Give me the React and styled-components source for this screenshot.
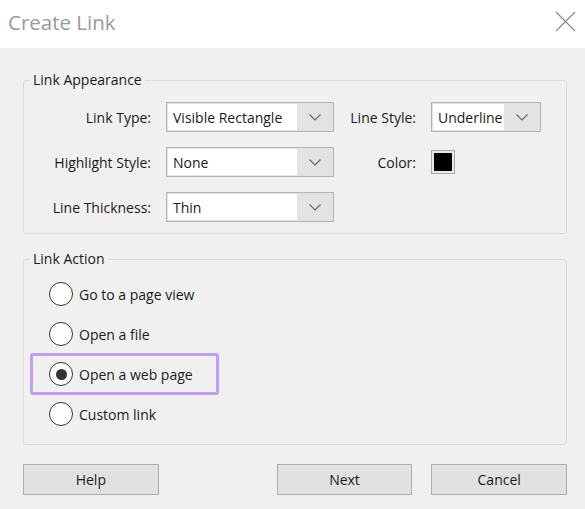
import React from 'react'
import styled, {createGlobalStyle} from "styled-components"

const Global=createGlobalStyle `
html, body {
  margin: 0;
  padding: 0;
  background: #f0f0f0;
}
body {
  font-family: "Open Sans", "Noto Sans", sans-serif;
  color: #1a1a1a;
}
`

const Dialog=styled.div `
width: 585px;
height: 509px;
display: flex;
flex-direction: column;
background: #f0f0f0;
overflow: hidden;
`

const TitleBar=styled.div `
height: 48px;
flex-shrink: 0;
display: flex;
align-items: center;
justify-content: space-between;
background: #ffffff;
padding: 0 9px 0 8px;
box-sizing: border-box;
`

const Title=styled.h1 `
margin: 0 0 4px 0;
font-size: 20.5px;
font-weight: 400;
color: #9a9a9a;
`

const Close=styled.button `
width: 22px;
height: 22px;
padding: 0;
border: none;
background: none;
display: flex;
align-items: center;
justify-content: center;
margin-bottom: 6px;
`

const Body=styled.div `
display: flex;
flex-direction: column;
padding: 23px 18px 0 23px;
gap: 16px;
`

const Group=styled.fieldset `
margin: 0;
padding: ${({$pad})=>$pad};
border: 1px solid #dcdcdc;
border-radius: 3px;
min-width: 0;
`

const Legend=styled.legend `
margin-left: 6px;
padding: 0 3px;
font-size: 14px;
line-height: 18px;
`

const FormGrid=styled.div `
display: grid;
grid-template-columns: 127px 168px 67px 110px;
grid-auto-rows: 30px;
column-gap: 15px;
row-gap: 15px;
align-items: center;
`

const Label=styled.span `
font-size: 14px;
text-align: right;
white-space: nowrap;
`

const Select=styled.div `
height: 30px;
box-sizing: border-box;
display: flex;
border: 1px solid #b4b4b4;
background: #e3e3e3;
padding: 1px;
`

const Value=styled.div `
flex: 1;
background: #ffffff;
font-size: 14px;
display: flex;
align-items: center;
padding-left: 5px;
white-space: nowrap;
`

const Arrow=styled.div `
width: 35px;
display: flex;
align-items: center;
justify-content: center;
`

const Swatch=styled.div `
width: 24px;
height: 24px;
box-sizing: border-box;
border: 1px solid #a8a8a8;
padding: 2px;
background: #e8e8e8;
&::after {
  content: "";
  display: block;
  width: 100%;
  height: 100%;
  background: #000;
}
`

const Options=styled.div `
display: flex;
flex-direction: column;
`

const Option=styled.div `
height: 40px;
display: flex;
align-items: center;
padding-left: 6px;
`

const Choice=styled.label `
width: 189px;
height: 42px;
box-sizing: border-box;
display: flex;
align-items: center;
gap: 6px;
padding-left: 16px;
border: 3px solid ${({$marked})=>$marked ? "#c49cf7" : "transparent"};
border-radius: 3px;
font-size: 14px;
`

const Radio=styled.span `
width: 24px;
height: 24px;
box-sizing: border-box;
border-radius: 50%;
border: 1.5px solid #333;
background: #fff;
display: flex;
align-items: center;
justify-content: center;
flex-shrink: 0;
&::after {
  content: "";
  width: 11px;
  height: 11px;
  border-radius: 50%;
  background: ${({$on})=>$on ? "#333" : "transparent"};
}
`

const Footer=styled.div `
display: flex;
align-items: center;
margin-top: 3px;
`

const Button=styled.button `
width: 136px;
height: 31px;
border: 1px solid #adadad;
background: #e1e1e1;
font-family: inherit;
font-size: 14px;
color: #1a1a1a;
padding: 0;
margin-left: ${({$gap})=>$gap || 0};
`

const Chevron=()=>(
  <svg width="12" height="7" viewBox="0 0 12 7">
    <path d="M0.5 0.5 L6 6 L11.5 0.5" fill="none" stroke="#666" strokeWidth="1.1"/>
  </svg>
)

const Dropdown=({value})=>(
  <Select>
    <Value>{value}</Value>
    <Arrow><Chevron/></Arrow>
  </Select>
)

const actions=["Go to a page view","Open a file","Open a web page","Custom link"]

const App =() => {
  return (
    <Dialog>
      <Global/>
      <TitleBar>
        <Title>Create Link</Title>
        <Close>
          <svg width="21" height="21" viewBox="0 0 21 21">
            <path d="M1 1 L20 20 M20 1 L1 20" stroke="#8a8a8a" strokeWidth="1.2"/>
          </svg>
        </Close>
      </TitleBar>
      <Body>
        <Group $pad="13px 0 11px 0">
          <Legend>Link Appearance</Legend>
          <FormGrid>
            <Label>Link Type:</Label>
            <Dropdown value="Visible Rectangle"/>
            <Label>Line Style:</Label>
            <Dropdown value="Underline"/>
            <Label>Highlight Style:</Label>
            <Dropdown value="None"/>
            <Label>Color:</Label>
            <Swatch/>
            <Label>Line Thickness:</Label>
            <Dropdown value="Thin"/>
          </FormGrid>
        </Group>
        <Group $pad="6px 0 10px 0">
          <Legend>Link Action</Legend>
          <Options>
            {actions.map((a,i)=>(
              <Option key={a}>
                <Choice $marked={i===2}>
                  <Radio $on={i===2}/>
                  {a}
                </Choice>
              </Option>
            ))}
          </Options>
        </Group>
        <Footer>
          <Button>Help</Button>
          <Button $gap="118px">Next</Button>
          <Button $gap="19px">Cancel</Button>
        </Footer>
      </Body>
    </Dialog>
  )
}

export default App
